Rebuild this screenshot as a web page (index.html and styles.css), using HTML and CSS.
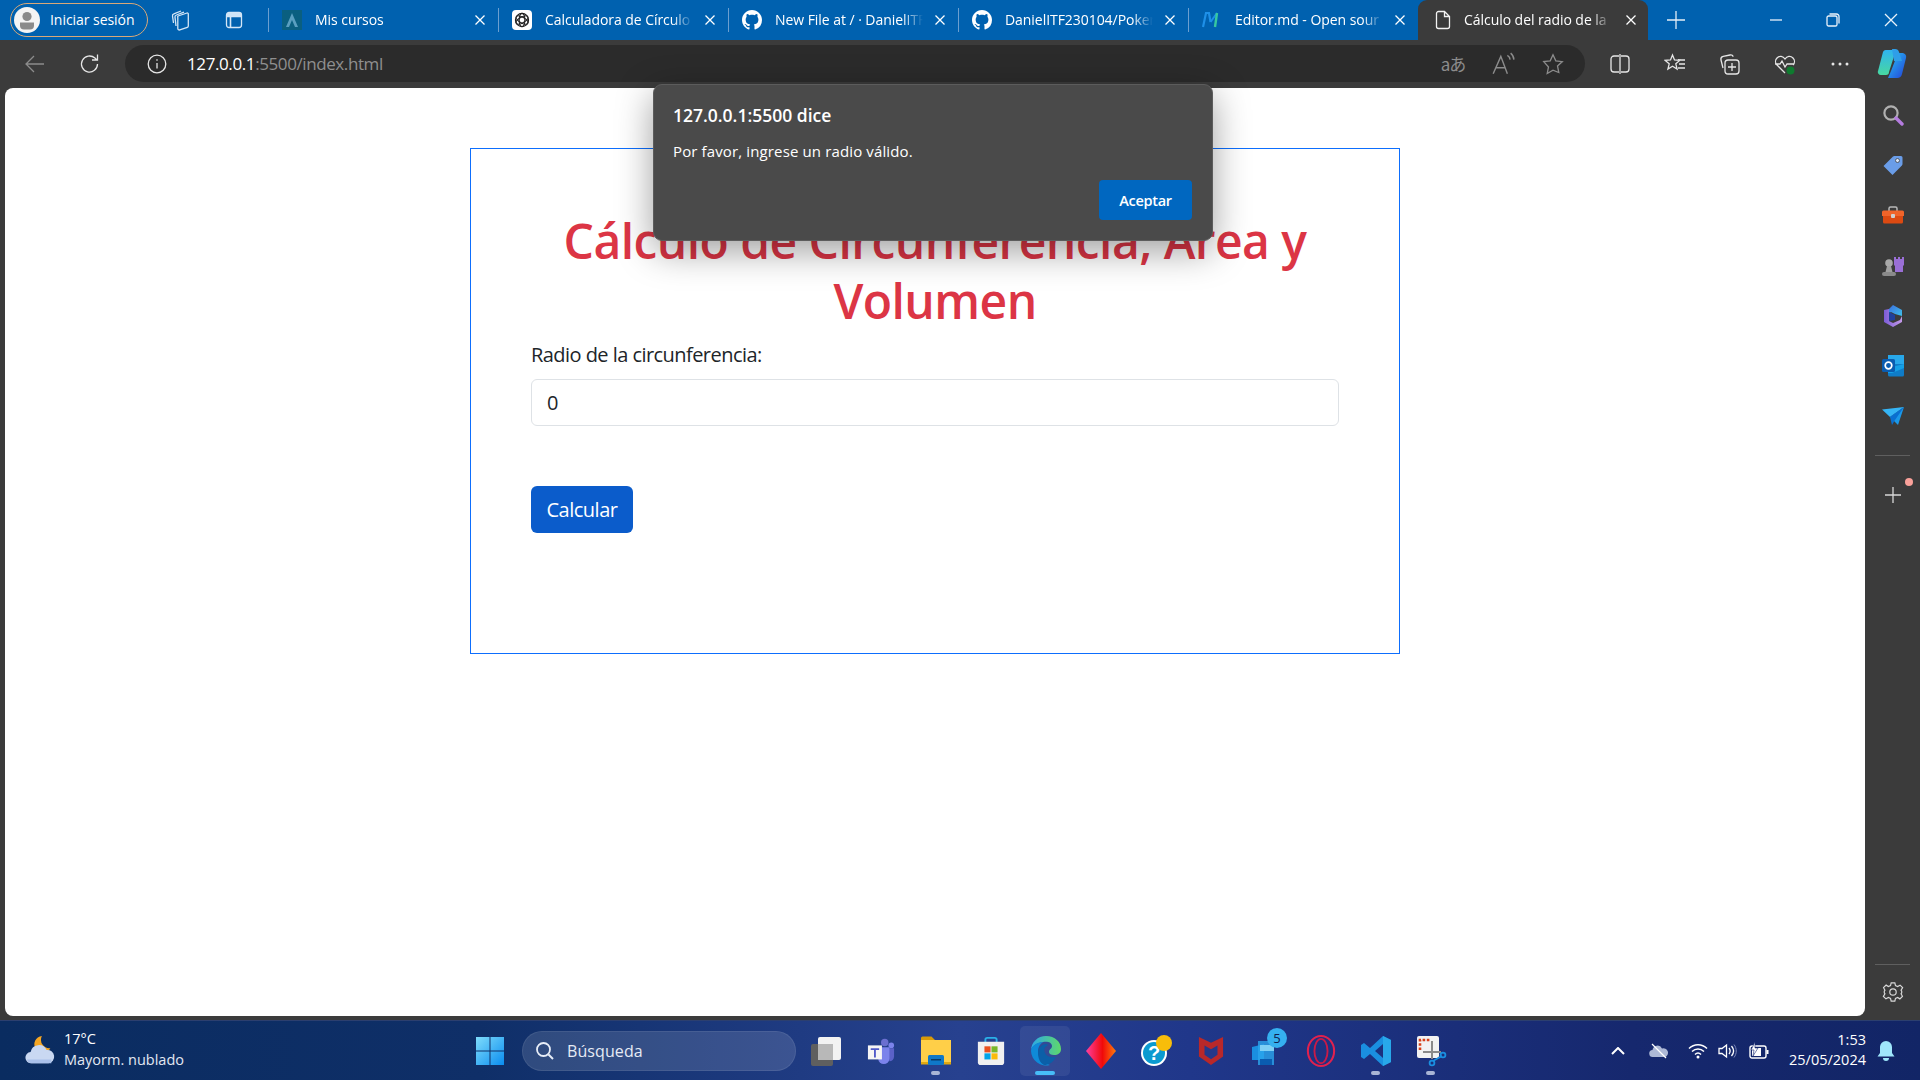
FILE: index.html
```html
<!DOCTYPE html>
<html lang="es">
<head>
<meta charset="utf-8">
<title>Cálculo del radio de la circunferencia</title>
<link rel="stylesheet" href="styles.css">
</head>
<body>
<div class="app">
  <header class="tabbar">
    <div class="profile">
      <span class="avatar"><svg viewBox="0 0 26 26" width="26" height="26"><circle cx="13" cy="13" r="13" fill="#f4f4f4"/><circle cx="13" cy="9.5" r="4.6" fill="#8a8a8a"/><path d="M6 15.5h14v3a4 4 0 0 1-4 4h-6a4 4 0 0 1-4-4z" fill="#8a8a8a"/></svg></span>
      <span class="profile-name">Iniciar sesión</span>
    </div>
    <div class="tb-tool"><svg class="ln" viewBox="0 0 24 24" width="26" height="26"><path d="M9 8l9-3a1 1 0 0 1 1.300 1v12a1.500 1.500 0 0 1-1 1.400l-7.500 2.500a1.500 1.500 0 0 1-2-1.400V9.500A1.500 1.500 0 0 1 9 8z"/><path d="M7 18 6 9a2 2 0 0 1 1.400-2L15 4.200"/><path d="M4.500 15 3.500 8a2 2 0 0 1 1.400-2.200L12 3"/></svg></div>
    <div class="tb-tool tb-tool-b"><svg class="ln" viewBox="0 0 20 20" width="20" height="20"><rect x="2.5" y="2.5" width="15" height="15" rx="2.5"/><path d="M2.5 6.5h15M6.5 6.5v11" stroke-width="1.6"/><path d="M3 3h14v3.5H3z" fill="#cfe4f7" stroke="none"/></svg></div>
    <i class="sep"></i>
    <div class="tab">
      <svg class="tab-icon" viewBox="0 0 20 20"><rect width="20" height="20" fill="#0a5f80"/><path d="M10 3 4 17h3l3-7 3 7h3z" fill="#5a9fc0"/></svg>
      <span class="tab-title">Mis cursos</span>
      <svg class="close" viewBox="0 0 12 12"><path d="M1.5 1.5l9 9M10.5 1.5l-9 9"/></svg>
    </div>
    <i class="sep"></i>
    <div class="tab">
      <svg class="tab-icon" viewBox="0 0 20 20"><rect width="20" height="20" rx="4" fill="#fff"/><g fill="none" stroke="#222" stroke-width="1.1"><circle cx="10" cy="10" r="6.6"/><ellipse cx="10" cy="10" rx="6.6" ry="2.8" transform="rotate(30 10 10)"/><ellipse cx="10" cy="10" rx="6.6" ry="2.8" transform="rotate(90 10 10)"/><ellipse cx="10" cy="10" rx="6.6" ry="2.8" transform="rotate(150 10 10)"/></g></svg>
      <span class="tab-title">Calculadora de Círculo</span>
      <svg class="close" viewBox="0 0 12 12"><path d="M1.5 1.5l9 9M10.5 1.5l-9 9"/></svg>
    </div>
    <i class="sep"></i>
    <div class="tab">
      <svg class="tab-icon" viewBox="0 0 16 16"><path fill="#fff" d="M8 0C3.58 0 0 3.58 0 8c0 3.54 2.29 6.53 5.47 7.59.4.07.55-.17.55-.38 0-.19-.01-.82-.01-1.49-2.01.37-2.53-.49-2.69-.94-.09-.23-.48-.94-.82-1.13-.28-.15-.68-.52-.01-.53.63-.01 1.08.58 1.23.82.72 1.21 1.87.87 2.33.66.07-.52.28-.87.51-1.07-1.78-.2-3.64-.89-3.64-3.95 0-.87.31-1.59.82-2.15-.08-.2-.36-1.02.08-2.12 0 0 .67-.21 2.2.82.64-.18 1.32-.27 2-.27.68 0 1.36.09 2 .27 1.53-1.04 2.2-.82 2.2-.82.44 1.1.16 1.92.08 2.12.51.56.82 1.27.82 2.15 0 3.07-1.87 3.75-3.65 3.95.29.25.54.73.54 1.48 0 1.07-.01 1.93-.01 2.2 0 .21.15.46.55.38A8.013 8.013 0 0016 8c0-4.42-3.58-8-8-8z"/></svg>
      <span class="tab-title">New File at / · DanielITF</span>
      <svg class="close" viewBox="0 0 12 12"><path d="M1.5 1.5l9 9M10.5 1.5l-9 9"/></svg>
    </div>
    <i class="sep"></i>
    <div class="tab">
      <svg class="tab-icon" viewBox="0 0 16 16"><path fill="#fff" d="M8 0C3.58 0 0 3.58 0 8c0 3.54 2.29 6.53 5.47 7.59.4.07.55-.17.55-.38 0-.19-.01-.82-.01-1.49-2.01.37-2.53-.49-2.69-.94-.09-.23-.48-.94-.82-1.13-.28-.15-.68-.52-.01-.53.63-.01 1.08.58 1.23.82.72 1.21 1.87.87 2.33.66.07-.52.28-.87.51-1.07-1.78-.2-3.64-.89-3.64-3.95 0-.87.31-1.59.82-2.15-.08-.2-.36-1.02.08-2.12 0 0 .67-.21 2.2.82.64-.18 1.32-.27 2-.27.68 0 1.36.09 2 .27 1.53-1.04 2.2-.82 2.2-.82.44 1.1.16 1.92.08 2.12.51.56.82 1.27.82 2.15 0 3.07-1.87 3.75-3.65 3.95.29.25.54.73.54 1.48 0 1.07-.01 1.93-.01 2.2 0 .21.15.46.55.38A8.013 8.013 0 0016 8c0-4.42-3.58-8-8-8z"/></svg>
      <span class="tab-title">DanielITF230104/Poker</span>
      <svg class="close" viewBox="0 0 12 12"><path d="M1.5 1.5l9 9M10.5 1.5l-9 9"/></svg>
    </div>
    <i class="sep"></i>
    <div class="tab">
      <svg class="tab-icon" viewBox="0 0 20 20"><path d="M1 17 4 3h3l1.5 9" fill="none" stroke="#1e90e8" stroke-width="2.2"/><path d="M8.5 12 15 3" fill="none" stroke="#1e90e8" stroke-width="2"/><path d="M15 3l-2 14" fill="none" stroke="#37c8a0" stroke-width="2.4"/></svg>
      <span class="tab-title">Editor.md - Open sour</span>
      <svg class="close" viewBox="0 0 12 12"><path d="M1.5 1.5l9 9M10.5 1.5l-9 9"/></svg>
    </div>
    <div class="tab tab-active">
      <svg class="tab-icon" viewBox="0 0 20 20"><path d="M3.5 3.5a2 2 0 0 1 2-2h6l5 5v10a2 2 0 0 1-2 2h-9a2 2 0 0 1-2-2zM11.5 1.5v5h5" fill="none" stroke="#f2f2f2" stroke-width="1.3"/></svg>
      <span class="tab-title">Cálculo del radio de la</span>
      <svg class="close" viewBox="0 0 12 12"><path d="M1.5 1.5l9 9M10.5 1.5l-9 9"/></svg>
    </div>
    <div class="newtab"><svg class="ln" viewBox="0 0 18 18" width="18" height="18"><path d="M9 0v18M0 9h18"/></svg></div>
    <div class="winctl">
      <span class="win-btn"><svg class="ln" viewBox="0 0 14 14" width="14" height="14"><path d="M1 7h12"/></svg></span>
      <span class="win-btn"><svg class="ln" viewBox="0 0 14 14" width="14" height="14"><rect x="1" y="3" width="10" height="10" rx="1.6"/><path d="M3.5 1h7a2.5 2.5 0 0 1 2.5 2.5v7"/></svg></span>
      <span class="win-btn"><svg class="ln" viewBox="0 0 14 14" width="14" height="14"><path d="M1 1l12 12M13 1L1 13"/></svg></span>
    </div>
  </header>

  <nav class="toolbar">
    <span class="nav-btn dim"><svg class="ln" viewBox="0 0 20 20" width="20" height="20"><path d="M19 10H1M9 2l-8 8 8 8"/></svg></span>
    <span class="nav-btn"><svg class="ln" viewBox="0 0 22 22" width="22" height="22"><path d="M18.5 11a8 8 0 1 1-2.6-5.9L18 7M18.5 1.5V7H13"/></svg></span>
    <div class="omnibox">
      <span class="omni-icon"><svg class="ln" viewBox="0 0 20 20" width="20" height="20"><circle cx="10" cy="10" r="8.8"/><path d="M10 9v5.5M10 5.2v1.6"/></svg></span>
      <span class="url"><b>127.0.0.1</b>:5500/index.html</span>
      <span class="omni-icon dim translate">aあ</span>
      <span class="omni-icon dim omni-gap"><svg class="ln" viewBox="0 0 22 22" width="24" height="24"><path d="M2 20 9 4l6 16M4.500 14.500h9M15 3a5 5 0 0 1 2.500 4M18 1a8 8 0 0 1 3 6"/></svg></span>
      <span class="omni-icon dim omni-gap"><svg class="ln" viewBox="0 0 22 22" width="22" height="22"><path d="M11 1.800l2.800 6 6.500.8-4.800 4.400 1.300 6.500L11 17.200l-5.800 3.300 1.300-6.500L1.700 8.600l6.500-.8z"/></svg></span>
    </div>
    <span class="tool"><svg class="ln" viewBox="0 0 22 22" width="22" height="22"><path d="M10 3H5a3 3 0 0 0-3 3v10a3 3 0 0 0 3 3h5M12 3h5a3 3 0 0 1 3 3v10a3 3 0 0 1-3 3h-5M11 1v20"/></svg></span>
    <span class="tool"><svg class="ln" viewBox="0 0 22 22" width="22" height="22"><path d="M8.500 2l2 5 5.300.4-4 3.400 1.300 5.200-4.600-2.800L3.900 16l1.300-5.200-4-3.400 5.300-.4zM14 7h7M15 11h6M14 15h7"/></svg></span>
    <span class="tool"><svg class="ln" viewBox="0 0 22 22" width="22" height="22"><path d="M4 15 2 7a3 3 0 0 1 2.200-3.600L11 2a3 3 0 0 1 3.300 1.600"/><rect x="6" y="7" width="14" height="14" rx="3"/><path d="M13 10v8M9 14h8"/></svg></span>
    <span class="tool"><svg class="ln" viewBox="0 0 22 22" width="22" height="22"><path d="M11 20 3 12a5 5 0 0 1 0-7c2.500-2.500 6-2 8 1 2-3 5.500-3.500 8-1a5 5 0 0 1 0 7M1 11h5l2-3 3 6 2-3h7"/><circle cx="16.500" cy="17.500" r="4" fill="#0f7b2f" stroke="none"/></svg></span>
    <span class="tool"><svg viewBox="0 0 18 4" width="18" height="4"><g fill="#e6e6e6"><circle cx="2" cy="2" r="1.500"/><circle cx="9" cy="2" r="1.500"/><circle cx="16" cy="2" r="1.500"/></g></svg></span>
    <span class="copilot"><svg viewBox="0 0 30 32" width="30" height="32"><defs><linearGradient id="cp1" x1="0" y1="0" x2="0" y2="1"><stop offset="0" stop-color="#2fb4f0"/><stop offset="1" stop-color="#48d8a0"/></linearGradient><linearGradient id="cp2" x1="0" y1="0" x2="1" y2="1"><stop offset="0" stop-color="#25c6f5"/><stop offset="1" stop-color="#2540d8"/></linearGradient></defs><path d="M9 2h10l-7 22a3 3 0 0 1-3 3H4a3 3 0 0 1-3-4L6 4a3 3 0 0 1 3-2z" fill="url(#cp1)"/><path d="M21 5h5a4 4 0 0 1 3 5l-4 16a5 5 0 0 1-5 4h-9l3-7 7-18z" fill="url(#cp2)"/><path d="M15 1h3a4 4 0 0 1 4 3l3 9h-8z" fill="#2f9ee8"/></svg></span>
  </nav>

  <div class="workspace">
    <main class="page">
      <section class="card">
        <h1 class="card-title">Cálculo de Circunferencia, Área y Volumen</h1>
        <label class="field-label" for="radio">Radio de la circunferencia:</label>
        <input class="field-input" id="radio" type="text" value="0">
        <button class="primary-btn" type="button">Calcular</button>
      </section>
    </main>
    <aside class="sidebar">
      <span class="side-item"><svg viewBox="0 0 22 22" width="22" height="22"><circle cx="9" cy="9" r="6.600" fill="none" stroke="#b0b0b0" stroke-width="2.200"/><path d="M14 14l6 6" stroke="#b57ce0" stroke-width="3.400" stroke-linecap="round"/></svg></span>
      <span class="side-item"><svg viewBox="0 0 22 22" width="22" height="22"><path d="M1.500 12 11 2.500a2 2 0 0 1 1.400-.6H19a1.500 1.500 0 0 1 1.500 1.500v6.600a2 2 0 0 1-.6 1.400L10.500 21z" fill="#6a9de8"/><circle cx="15.500" cy="6.500" r="2" fill="#dbe8fb" stroke="#444" stroke-width=".8"/></svg></span>
      <span class="side-item"><svg viewBox="0 0 22 22" width="22" height="22"><path d="M7 7V4.500A1.500 1.500 0 0 1 8.500 3h5A1.500 1.500 0 0 1 15 4.500V7" fill="none" stroke="#b8b8b8" stroke-width="1.500"/><path d="M0 8a1.500 1.500 0 0 1 1.500-1.500h19A1.500 1.500 0 0 1 22 8v4H0z" fill="#f0642a"/><path d="M1 12h20v6a1.500 1.500 0 0 1-1.500 1.500h-17A1.500 1.500 0 0 1 1 18z" fill="#dc4a12"/><rect x="9" y="10" width="4" height="4" rx="1" fill="#cfcfcf"/></svg></span>
      <span class="side-item"><svg viewBox="0 0 24 24" width="24" height="24"><path d="M13 3h2v2h2V3h2v2h2V3h2v8l-1 1v6h-8v-6l-1-1z" fill="#9a6fd6"/><circle cx="8" cy="9" r="3.800" fill="#a8a8a8"/><path d="M6 12h4l1.500 6h-7z" fill="#a0a0a0"/><rect x="1" y="18" width="14" height="4" rx="2" fill="#8a8a8a"/></svg></span>
      <span class="side-item"><svg viewBox="0 0 24 24" width="24" height="24"><defs><linearGradient id="m1" x1="0" y1="0" x2="1" y2="1"><stop offset="0" stop-color="#3a6fe0"/><stop offset="1" stop-color="#3fc0e8"/></linearGradient><linearGradient id="m2" x1="0" y1="0" x2="1" y2="0"><stop offset="0" stop-color="#7c5cd8"/><stop offset="1" stop-color="#c49ae8"/></linearGradient></defs><path d="M12 1l9 5v6l-7-2-4-2-2 1V5z" fill="url(#m1)"/><path d="M3 6l5-1v12l4 2 7-3 2-4v6l-9 5-9-5z" fill="url(#m2)"/><path d="M8 8l6 3v5l-6 1z" fill="#21409a"/></svg></span>
      <span class="side-item"><svg viewBox="0 0 24 24" width="24" height="24"><rect x="7" y="1" width="16" height="11" fill="#28a8ea"/><path d="M7 10h16v11a1.500 1.500 0 0 1-1.500 1.500H8.500A1.500 1.500 0 0 1 7 21z" fill="#0f7cc8"/><path d="M7 14l16-4v4l-12 5H7z" fill="#14a0e6"/><rect x="1" y="5" width="13" height="13" rx="1.500" fill="#0a5cb0"/><circle cx="7.500" cy="11.500" r="3.300" fill="none" stroke="#fff" stroke-width="1.700"/></svg></span>
      <span class="side-item"><svg viewBox="0 0 24 24" width="24" height="24"><path d="M1 5.500 23 3 9 13z" fill="#35b5f5"/><path d="M23 3 17 21l-8-8z" fill="#1a98e8"/><path d="M23 3 9 13l2 8 3-5z" fill="#0a6fd0"/></svg></span>
      <i class="side-div"></i>
      <span class="side-item side-add"><svg class="ln" viewBox="0 0 16 16" width="16" height="16"><path d="M8 0v16M0 8h16"/></svg><i class="side-dot"></i></span>
      <i class="side-div side-div-low"></i>
      <span class="side-item side-gear"><svg class="ln" viewBox="0 0 24 24" width="22" height="22"><circle cx="12" cy="12" r="3.500"/><path d="M10 2h4l.7 3 2.300 1 2.700-1.500 2.800 2.800L20.800 10l.7 1v2l-.7 1 1.500 2.700-2.800 2.800L17 18l-2.300 1-.7 3h-4l-.7-3L7 18l-2.700 1.500-2.800-2.800L3.200 14l-.7-1v-2l.7-1L1.700 7.300l2.800-2.800L7 6l2.300-1z"/></svg></span>
    </aside>
  </div>

  <footer class="taskbar">
    <div class="weather">
      <svg viewBox="0 0 36 34" width="34" height="32"><path d="M20 1a9 9 0 1 0 9 13 9 9 0 0 1-9-13z" fill="#f5a623"/><path d="M9 30a6 6 0 0 1-1-12 9 9 0 0 1 17-2 7 7 0 0 1 2 14z" fill="#c9d8f2"/><path d="M4 26h26v4H9a6 6 0 0 1-5-4z" fill="#a9c0ea"/></svg>
      <div class="weather-text"><span class="wt-temp">17°C</span><span class="wt-desc">Mayorm. nublado</span></div>
    </div>
    <span class="task-slot"><svg viewBox="0 0 30 30" width="30" height="30"><defs><linearGradient id="w1" x1="0" y1="0" x2="1" y2="1"><stop offset="0" stop-color="#7fdcfb"/><stop offset="1" stop-color="#0a8df0"/></linearGradient></defs><path d="M1 1h13.500v13.500H1zM15.500 1H29v13.500H15.500zM1 15.500h13.500V29H1zM15.500 15.500H29V29H15.500z" fill="url(#w1)"/></svg></span>
    <div class="search-pill">
      <svg viewBox="0 0 20 20" width="20" height="20"><circle cx="8.500" cy="8.500" r="6.500" fill="none" stroke="#e8eef8" stroke-width="1.800"/><path d="M13.500 13.500 18 18" stroke="#e8eef8" stroke-width="2"/></svg>
      <span class="search-text">Búsqueda</span>
    </div>
    <span class="task-slot"><svg viewBox="0 0 32 32" width="32" height="32"><rect x="1" y="9" width="22" height="22" rx="2" fill="#5f5f5f"/><rect x="8" y="2" width="23" height="23" rx="2" fill="#f2f2f2"/><rect x="8" y="9" width="15" height="16" fill="#b8b8b8"/></svg></span>
    <span class="task-slot"><svg viewBox="0 0 30 30" width="28" height="28"><circle cx="19" cy="6" r="4" fill="#6a6fd0"/><circle cx="26" cy="9" r="3" fill="#7b83eb"/><path d="M22 12h7v9a5 5 0 0 1-5 5z" fill="#5b62c8"/><path d="M12 11h12v12a6 6 0 0 1-12 0z" fill="#7b83eb"/><rect x="1" y="9" width="15" height="15" fill="#f5f5f5"/><path d="M4 12h9v2H9.500v8h-2v-8H4z" fill="#5059c9"/></svg></span>
    <span class="task-slot running"><svg viewBox="0 0 32 32" width="32" height="32"><path d="M1 3a1.500 1.500 0 0 1 1.500-1.500h9L15 5H1z" fill="#d89a08"/><path d="M1 5h30v24H1z" fill="#ffcf48"/><rect x="1" y="27" width="30" height="2.500" fill="#e0a810"/><rect x="8" y="20" width="16" height="10" rx="1.500" fill="#0f78c8"/><rect x="11" y="24" width="10" height="1.500" fill="#063a6a"/></svg></span>
    <span class="task-slot"><svg viewBox="0 0 32 32" width="30" height="30"><path d="M10 7V4a2 2 0 0 1 2-2h8a2 2 0 0 1 2 2v3" fill="none" stroke="#2ab0e8" stroke-width="2"/><path d="M2 6h28v22a3 3 0 0 1-3 3H5a3 3 0 0 1-3-3z" fill="#f0f0f0"/><rect x="9" y="11" width="6.500" height="6.500" fill="#e8501f"/><rect x="16.500" y="11" width="6.500" height="6.500" fill="#78b82a"/><rect x="9" y="18.500" width="6.500" height="6.500" fill="#00a4e8"/><rect x="16.500" y="18.500" width="6.500" height="6.500" fill="#fbbb0a"/></svg></span>
    <span class="task-slot task-active"><svg viewBox="0 0 32 32" width="32" height="32"><defs><linearGradient id="e1" x1="0" y1="0" x2="1" y2="0"><stop offset="0" stop-color="#2ca8e8"/><stop offset="1" stop-color="#5fd86a"/></linearGradient></defs><path d="M1 16C1 7 8 1 16 1c9 0 15 6 15 13 0 4-3 6-7 6-3 0-5-1-5-3 0-3 3-3 3-6 0-4-5-5-9-4-7 1-12 5-12 9z" fill="url(#e1)"/><path d="M1 16c0-5 6-9 12-9-3 2-5 5-5 9 0 7 5 12 12 14a15 15 0 0 1-19-14z" fill="#0f8ad8"/><path d="M8 18c0-5 4-9 8-9 2 0 2 1 1 2-3 1-3 4-2 7 2 4 6 5 11 4-3 6-8 8-12 8-4-2-6-7-6-12z" fill="#0b5fa8"/></svg></span>
    <span class="task-slot"><svg viewBox="0 0 30 36" width="30" height="36"><defs><linearGradient id="d1" x1="0" y1="0" x2="1" y2="0"><stop offset="0" stop-color="#ff3fa0"/><stop offset=".55" stop-color="#f00a0a"/><stop offset="1" stop-color="#ff7a0a"/></linearGradient></defs><path d="M15 0 30 18 15 36 0 18z" fill="url(#d1)"/></svg></span>
    <span class="task-slot"><svg viewBox="0 0 32 32" width="32" height="32"><circle cx="14" cy="18" r="13" fill="#fff"/><circle cx="14" cy="18" r="11" fill="#0b9ad0"/><text x="14" y="25" class="help-q">?</text><circle cx="24" cy="8" r="8" fill="#f8bd0a"/></svg></span>
    <span class="task-slot"><svg viewBox="0 0 28 32" width="26" height="32"><path d="M1 1l13 6 13-6v21l-13 9-13-9z" fill="#b8282a"/><path d="M7 10l7 4 7-4v10l-7 5-7-5z" fill="#24388a"/></svg></span>
    <span class="task-slot"><svg viewBox="0 0 32 32" width="32" height="32"><path d="M2 12l12-3v16H2z" fill="#1a8fe0"/><path d="M8 6h16v24H8z" fill="#2ba5ec" opacity=".8"/><path d="M10 24h12v6H10z" fill="#0a5cb0"/><path d="M10 10h14v6H10z" fill="#7fd0f5"/></svg><b class="badge">5</b></span>
    <span class="task-slot"><svg viewBox="0 0 32 36" width="30" height="34"><ellipse cx="16" cy="18" rx="14" ry="16" fill="none" stroke="#e0214f" stroke-width="2.200"/><ellipse cx="16" cy="18" rx="7" ry="13" fill="none" stroke="#c81a48" stroke-width="2"/></svg></span>
    <span class="task-slot running"><svg viewBox="0 0 32 32" width="32" height="32"><path d="M23 1 31 5v22l-8 4-13-12-6 5-3-2V10l3-2 6 5zM23 9l-8 7 8 7z" fill="#1a8fe0" fill-rule="evenodd"/><path d="M23 1 31 5v22l-8 4z" fill="#28a8ea"/></svg></span>
    <span class="task-slot running"><svg viewBox="0 0 32 32" width="32" height="32"><rect x="2" y="1" width="22" height="22" rx="2" fill="#f2f2f2"/><path d="M5 15V5h10" fill="none" stroke="#d8401a" stroke-width="2.600" stroke-dasharray="2.600 1.600"/><path d="M17 6v18M8 17h18" stroke="#8a8a8a" stroke-width="2"/><circle cx="28" cy="20" r="2.400" fill="none" stroke="#1a8fe0" stroke-width="1.800"/><circle cx="17" cy="28" r="2.400" fill="none" stroke="#1a8fe0" stroke-width="1.800"/><path d="M18 26l9-5" stroke="#1a8fe0" stroke-width="1.600"/></svg></span>
    <div class="tray">
      <span class="tray-item tray-chev"><svg viewBox="0 0 14 8" width="14" height="8"><path d="M1 7l6-6 6 6" fill="none" stroke="#fff" stroke-width="2"/></svg></span>
      <span class="tray-item tray-cloud"><svg viewBox="0 0 20 16" width="20" height="16"><path d="M4 14a3.500 3.500 0 0 1-.5-7A5 5 0 0 1 13 5.500 4 4 0 0 1 16 14z" fill="#aeb9d6"/><path d="M3 1l14 14" stroke="#fff" stroke-width="1.300"/></svg></span>
      <span class="tray-item tray-wifi"><svg viewBox="0 0 20 16" width="20" height="16"><path d="M1 5.500c5-5 13-5 18 0M4 8.500c3.500-3.500 8.500-3.500 12 0M7 11.500c2-2 4-2 6 0" fill="none" stroke="#fff" stroke-width="1.500"/><circle cx="10" cy="14" r="1.500" fill="#fff"/></svg></span>
      <span class="tray-item tray-vol"><svg viewBox="0 0 20 16" width="20" height="16"><path d="M1 5.500h3L8.500 2v12L4 10.500H1z" fill="none" stroke="#fff" stroke-width="1.300"/><path d="M11 5c1.500 2 1.500 4 0 6M13.500 3c2.500 3 2.500 7 0 10" fill="none" stroke="#fff" stroke-width="1.300"/><path d="M16 1.500c3 4 3 9 0 13" fill="none" stroke="#7a86b8" stroke-width="1"/></svg></span>
      <span class="tray-item tray-batt"><svg viewBox="0 0 20 18" width="20" height="18"><rect x="1" y="4" width="16" height="12" rx="2" fill="none" stroke="#fff" stroke-width="1.400"/><rect x="17.500" y="8" width="2" height="4" fill="#fff"/><rect x="3" y="6" width="9" height="8" fill="#fff"/><path d="M6 0 2 8h3l-1 6 5-8H6z" fill="#fff" stroke="#1a2a70" stroke-width=".6"/></svg></span>
      <div class="clock"><span>1:53</span><span>25/05/2024</span></div>
      <span class="tray-item tray-bell"><svg viewBox="0 0 18 22" width="18" height="22"><path d="M9 1a6 6 0 0 1 6 6v6l2.500 3.500H.5L3 13V7a6 6 0 0 1 6-6z" fill="#9fe6fb"/><path d="M6 18h6a3 3 0 0 1-6 0z" fill="#9fe6fb"/></svg></span>
    </div>
  </footer>

  <div class="alert" role="alertdialog">
    <div class="alert-title">127.0.0.1:5500 dice</div>
    <div class="alert-msg">Por favor, ingrese un radio válido.</div>
    <div class="alert-actions"><button class="alert-btn" type="button">Aceptar</button></div>
  </div>
</div>
</body>
</html>
```
FILE: styles.css
```css
* { box-sizing: border-box; }
html, body { margin: 0; padding: 0; }
body { font-family: "Open Sans", "Noto Sans", sans-serif; background: #3b3b3b; }
.app { position: relative; width: 1920px; height: 1080px; overflow: hidden; display: flex; flex-direction: column; }

.ln { fill: none; stroke: currentColor; stroke-width: 1.300; }
.dim { color: #8c8c8c; }

/* Tab strip */
.tabbar { height: 40px; background: #0061af; color: #fff; display: flex; align-items: center; font-size: 14px; letter-spacing: -.05px; flex: none; }
.profile { margin-left: 10px; width: 138px; height: 34px; border: 1px solid #d9a878; border-radius: 17px; display: flex; align-items: center; padding-left: 3px; gap: 10px; flex: none; }
.avatar { display: flex; }
.profile-name { white-space: nowrap; padding-bottom: 2px; }
.tb-tool { width: 24px; display: flex; justify-content: center; margin-left: 21px; color: #d4e6f6; flex: none; }
.tb-tool-b { margin-left: 29px; }
.sep { width: 1px; height: 24px; background: #6b9fd0; flex: none; }
.tb-tool + .sep { margin-left: 22px; }
.tab { width: 229px; height: 40px; padding-left: 13px; display: flex; align-items: center; flex: none; }
.tab-icon { width: 20px; height: 20px; margin-right: 13px; flex: none; }
.tab-title { width: 148px; padding-bottom: 2px; white-space: nowrap; overflow: hidden; -webkit-mask-image: linear-gradient(90deg, #000 86%, transparent); mask-image: linear-gradient(90deg, #000 86%, transparent); flex: none; }
.close { width: 12px; height: 12px; margin-left: 11px; fill: none; stroke: #fff; stroke-width: 1.300; flex: none; }
.tab-active { width: 230px; background: #3b3b3b; border-radius: 9px 9px 0 0; padding-left: 15px; position: relative; }
.tab-active .tab-icon { margin-right: 11px; }
.tab-active .close { margin-left: 13px; }
.newtab { display: flex; width: 18px; margin-left: 19px; color: #e4eef8; flex: none; }
.winctl { margin-left: 62px; display: flex; }
.win-btn { width: 57.500px; display: flex; justify-content: center; color: #eaf2fa; }

/* Toolbar */
.toolbar { height: 48px; background: #3b3b3b; color: #e6e6e6; display: flex; align-items: flex-start; flex: none; padding-left: 7px; }
.nav-btn { width: 55px; height: 37px; margin-top: 5px; display: flex; align-items: center; justify-content: center; }
.omnibox { width: 1460px; height: 37px; margin: 5px 0 0 8px; background: #2b2b2b; border-radius: 19px; display: flex; align-items: center; padding: 0 20px; flex: none; }
.omni-icon { width: 24px; display: flex; justify-content: center; flex: none; }
.translate { font-family: "Noto Sans CJK JP", "Open Sans", sans-serif; font-size: 17px; line-height: 20px; white-space: nowrap; letter-spacing: -1px; }
.omni-gap { margin-left: 26px; }
.url { margin-left: 18px; flex: 1; font-size: 17px; letter-spacing: -.4px; color: #8f8f8f; }
.url b { font-weight: 400; color: #fff; }
.tool { width: 55px; height: 37px; margin-top: 5px; display: flex; align-items: center; justify-content: center; flex: none; }
.toolbar .omnibox + .tool { margin-left: 7px; }
.copilot { width: 50px; height: 37px; margin-top: 5px; display: flex; align-items: center; justify-content: center; flex: none; }

/* Main */
.workspace { height: 932px; display: flex; flex: none; padding: 0 0 4px 5px; }
.page { width: 1860px; background: #fff; border-radius: 8px; flex: none; padding-top: 60px; }
.card { width: 930px; height: 506px; margin-left: 465px; border: 1px solid #0d6efd; padding: 62px 60px 0; color: #212529; }
.card-title { margin: 0 0 9px; font-size: 48px; line-height: 60px; font-weight: 600; color: #dc3545; text-align: center; letter-spacing: -.55px; }
.field-label { display: block; font-size: 20px; line-height: 30px; margin-bottom: 9px; letter-spacing: -.55px; }
.field-input { display: block; width: 100%; height: 47px; border: 1px solid #dee2e6; border-radius: 6px; padding: 0 15px; font: inherit; font-size: 20px; color: #212529; background: #fff; outline: 0; }
.primary-btn { display: block; margin-top: 60px; width: 102px; height: 47px; border: 0; border-radius: 6px; background: #0b5ccb; color: #fff; font: inherit; font-size: 20px; letter-spacing: -.5px; padding: 0; }

/* Sidebar */
.sidebar { width: 55px; padding-top: 2px; display: flex; flex-direction: column; align-items: center; flex: none; color: #d8d8d8; }
.side-item { width: 55px; height: 50.200px; display: flex; align-items: center; justify-content: center; flex: none; position: relative; }
.side-div { width: 35px; height: 1px; background: #5f5f5f; margin-top: 14px; flex: none; }
.side-add { margin-top: 14px; }
.side-dot { position: absolute; width: 8px; height: 8px; border-radius: 50%; background: #f9a19a; left: 40px; top: 8px; }
.side-div-low { margin-top: auto; margin-bottom: 2px; }
.side-gear { margin-bottom: -1px; }

/* Taskbar */
.taskbar { height: 60px; flex: none; display: flex; align-items: center; color: #fff; font-size: 14.500px; background: linear-gradient(90deg, #0a2c60 0%, #0f2f68 25%, #27418f 50%, #20378a 62%, #16286e 85%, #122566 100%); border-top: 1px solid #2c3f6f; }
.weather { width: 462px; display: flex; align-items: center; padding-left: 23px; gap: 7px; flex: none; }
.weather-text { display: flex; flex-direction: column; line-height: 21px; padding-bottom: 3px; }
.wt-desc { color: #e2e8f2; }
.task-slot { width: 55px; height: 50px; display: flex; align-items: center; justify-content: center; flex: none; position: relative; }
.search-pill { width: 274px; height: 40px; margin: 0 2px 0 5px; border-radius: 20px; background: rgba(255,255,255,.13); border: 1px solid rgba(255,255,255,.08); display: flex; align-items: center; padding-left: 12px; gap: 12px; flex: none; }
.search-text { font-size: 16px; color: #e6ebf5; letter-spacing: .1px; }
.running::after, .task-active::after { content: ""; position: absolute; left: 23px; bottom: 1px; width: 9px; height: 4px; border-radius: 2px; background: #a9b5d5; }
.task-active::before { content: ""; position: absolute; left: 2px; top: 0; width: 50px; height: 50px; border-radius: 5px; background: rgba(255,255,255,.07); }
.task-active::after { left: 17px; width: 20px; background: #47bdf8; }
.task-active svg { position: relative; }
.help-q { font-family: "Liberation Sans", sans-serif; font-size: 20px; font-weight: 700; fill: #fff; text-anchor: middle; }
.badge { position: absolute; right: 6px; top: 2px; width: 20px; height: 20px; border-radius: 50%; background: #35b0f0; color: #102050; font-size: 13px; font-weight: 400; display: flex; align-items: center; justify-content: center; }
.tray { display: flex; align-items: center; flex: none; }
.tray-item { display: flex; justify-content: center; align-items: center; flex: none; }
.tray-chev { margin-left: 153px; width: 14px; }
.tray-cloud { margin-left: 24px; width: 20px; }
.tray-wifi { margin-left: 19px; width: 20px; }
.tray-vol { margin-left: 10px; width: 20px; }
.tray-batt { margin-left: 11px; width: 20px; }
.clock { width: 97px; display: flex; flex-direction: column; align-items: flex-end; line-height: 20px; padding-bottom: 2px; }
.tray-bell { margin-left: 11px; width: 18px; }

/* Alert */
.alert { position: absolute; left: 653px; top: 84px; width: 560px; height: 157px; background: #4a4a4a; border: 1px solid #5c5c5c; border-radius: 9px; box-shadow: 0 10px 36px rgba(0,0,0,.38); color: #fff; padding: 18px 20px 20px; }
.alert-title { font-size: 17.500px; line-height: 24px; font-weight: 600; letter-spacing: 0; margin-left: -1px; }
.alert-msg { font-size: 15px; line-height: 22px; margin-top: 13px; letter-spacing: .13px; margin-left: -1px; }
.alert-actions { display: flex; justify-content: flex-end; margin-top: 18px; }
.alert-btn { width: 93px; height: 40px; border: 0; border-radius: 4px; background: #0067c0; color: #fff; font: inherit; font-size: 14.500px; font-weight: 600; letter-spacing: -.3px; padding: 0; }
```
